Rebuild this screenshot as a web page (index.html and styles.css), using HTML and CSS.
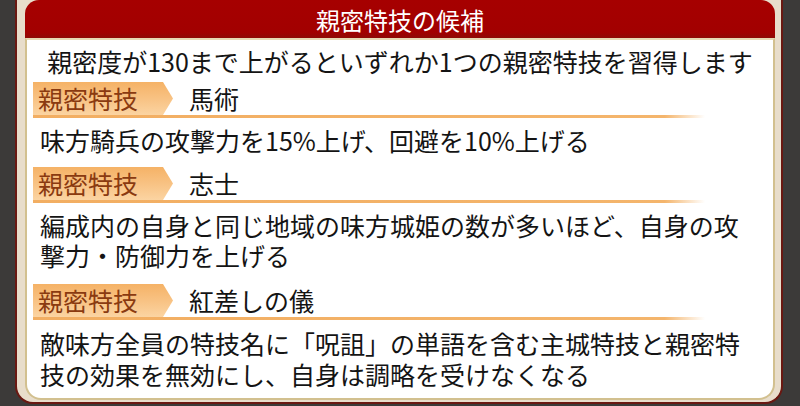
FILE: index.html
```html
<!DOCTYPE html>
<html lang="ja">
<head>
<meta charset="utf-8">
<link rel="stylesheet" href="styles.css">
</head>
<body>
<div class="frame">
  <div class="header">親密特技の候補</div>
  <div class="panel">
    <p class="intro">親密度が130まで上がるといずれか1つの親密特技を習得します</p>
    <div class="skill">
      <div class="skill-head">
        <div class="ribbon">親密特技</div>
        <div class="name">馬術</div>
      </div>
      <div class="underline"></div>
      <p class="desc">味方騎兵の攻撃力を15%上げ、回避を10%上げる</p>
    </div>
    <div class="skill">
      <div class="skill-head">
        <div class="ribbon">親密特技</div>
        <div class="name">志士</div>
      </div>
      <div class="underline"></div>
      <p class="desc">編成内の自身と同じ地域の味方城姫の数が多いほど、自身の攻<br>撃力・防御力を上げる</p>
    </div>
    <div class="skill">
      <div class="skill-head">
        <div class="ribbon">親密特技</div>
        <div class="name">紅差しの儀</div>
      </div>
      <div class="underline"></div>
      <p class="desc">敵味方全員の特技名に「呪詛」の単語を含む主城特技と親密特<br>技の効果を無効にし、自身は調略を受けなくなる</p>
    </div>
  </div>
</div>
</body>
</html>
```

FILE: styles.css
```css
html, body {
  margin: 0;
  padding: 0;
}
body {
  width: 800px;
  height: 406px;
  overflow: hidden;
  background: #3c3a39;
  font-family: "Noto Sans CJK JP", "Noto Sans", sans-serif;
  display: flex;
}
.frame {
  box-sizing: border-box;
  margin-left: 15px;
  width: 768px;
  height: 404px;
  border: 2px solid #6a1812;
  border-top: none;
  border-radius: 0 0 18px 18px;
  background: #e8ddcb;
  padding: 0 6px 0 8px;
  display: flex;
  flex-direction: column;
}
.header {
  height: 38px;
  border-radius: 14px 14px 0 0;
  background: linear-gradient(to bottom, #a60000 0%, #a20000 85%, #8e0a06 100%);
  color: #ffffff;
  font-size: 24px;
  line-height: 40px;
  text-align: center;
}
.panel {
  box-sizing: border-box;
  height: 362px;
  background: #ffffff;
  border: 2px solid #d2c08f;
  border-top-color: #e6d9b4;
  border-radius: 0 0 16px 16px;
  padding: 6px 0 0 0;
  color: #141414;
}
.intro {
  margin: 0;
  font-size: 25px;
  line-height: 30px;
  text-align: center;
}
.skill {
  margin-top: 6px;
}
.skill + .skill {
  margin-top: 12px;
}
.skill:last-child {
  margin-top: 14px;
}
.skill-head {
  display: flex;
  align-items: center;
  height: 33px;
  margin-left: 6px;
}
.ribbon {
  width: 140px;
  height: 33px;
  box-sizing: border-box;
  padding-left: 5px;
  font-size: 25px;
  line-height: 33px;
  color: #8a3a10;
  background: linear-gradient(to bottom, #f5b266 0%, #f8c283 50%, #fbd4a2 100%);
  clip-path: polygon(0 0, 130px 0, 140px 50%, 130px 100%, 0 100%);
}
.name {
  margin-left: 16px;
  font-size: 25px;
  line-height: 33px;
}
.underline {
  margin-left: 6px;
  width: 672px;
  height: 3px;
  background: linear-gradient(to right, #f2ae62 0%, #f4b56c 94%, rgba(248, 200, 140, 0) 100%);
}
.desc {
  margin: 7px 0 0 13px;
  font-size: 25px;
  line-height: 30px;
}
.skill:last-child .desc {
  margin-top: 8px;
  line-height: 31px;
}
```
